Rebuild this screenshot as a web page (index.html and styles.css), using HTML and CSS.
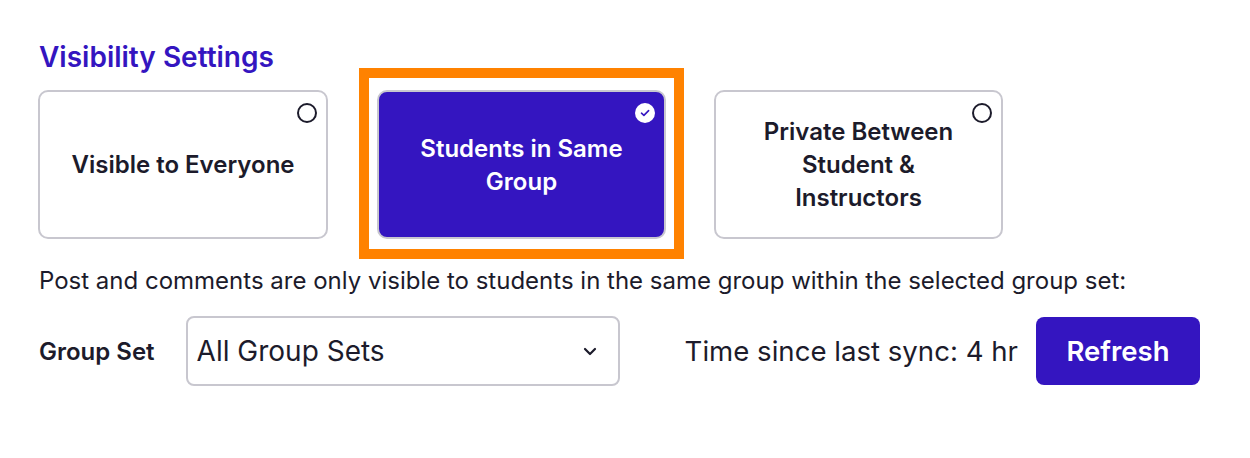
FILE: index.html
```html
<!DOCTYPE html>
<html lang="en">
<head>
    <meta charset="UTF-8">
    <meta name="viewport" content="width=device-width, initial-scale=1.0">
    <title>Visibility Settings</title>
    <link rel="stylesheet" href="styles.css">
</head>
<body>
    <div id="settings">
        <h2 class="section-title">Visibility Settings</h2>
        <div class="options">
            <div class="option">
                <span class="radio"></span>
                <span class="option-label">Visible to Everyone</span>
            </div>
            <div class="option selected">
                <span class="radio checked">
                    <svg width="10" height="8" viewBox="0 0 10 8"><path d="M1.5 4.2 L3.9 6.4 L8.6 1.6" fill="none" stroke="#3415c0" stroke-width="1.6" stroke-linecap="round" stroke-linejoin="round"/></svg>
                </span>
                <span class="option-label">Students in Same Group</span>
            </div>
            <div class="option">
                <span class="radio"></span>
                <span class="option-label">Private Between Student &amp; Instructors</span>
            </div>
        </div>
        <p class="hint">Post and comments are only visible to students in the same group within the selected group set:</p>
        <div class="group-row">
            <span class="group-label">Group Set</span>
            <div class="select">
                <span>All Group Sets</span>
                <svg width="14" height="9" viewBox="0 0 14 9"><path d="M2 2 L7 7 L12 2" fill="none" stroke="#1c1b2b" stroke-width="2.2" stroke-linecap="round" stroke-linejoin="round"/></svg>
            </div>
            <span class="sync">Time since last sync: 4 hr</span>
            <button class="refresh">Refresh</button>
        </div>
    </div>
</body>
</html>
```

FILE: styles.css
```css
body {
    margin: 0;
    padding: 0;
    background: #fff;
    font-family: 'Inter', 'Noto Sans', sans-serif;
    color: #1c1b2b;
}
#settings {
    padding: 40px 38px 0;
}
.section-title {
    margin: 0 0 16px 1px;
    font-size: 28px;
    line-height: 34px;
    font-weight: 600;
    color: #3415c0;
}
.options {
    display: flex;
    gap: 48px;
}
.option {
    position: relative;
    box-sizing: border-box;
    width: 290px;
    height: 149px;
    padding: 0 28px;
    border: 2px solid #c8c7cf;
    border-radius: 10px;
    display: flex;
    align-items: center;
    justify-content: center;
    text-align: center;
    background: #fff;
}
.option + .option {
    width: 289px;
}
.option-label {
    font-size: 24px;
    line-height: 33px;
    font-weight: 600;
}
.option.selected {
    margin-left: 1px;
    background: #3415c0;
    color: #fff;
}
/* focus ring drawn around the selected card */
.option.selected::before {
    content: "";
    position: absolute;
    top: -24px;
    left: -20px;
    right: -20px;
    bottom: -22px;
    border: 10px solid #ff8200;
}
.radio {
    position: absolute;
    top: 11px;
    right: 9px;
    box-sizing: border-box;
    width: 20px;
    height: 20px;
    border: 2px solid #1c1b2b;
    border-radius: 50%;
    display: flex;
    align-items: center;
    justify-content: center;
}
.radio.checked {
    border: none;
    background: #fff;
}
.hint {
    margin: 27px 0 0 1px;
    font-size: 24px;
    line-height: 29px;
}
.group-row {
    display: flex;
    align-items: center;
    margin-top: 21px;
}
.group-label {
    font-size: 24px;
    font-weight: 600;
    margin: 0 31px 0 1px;
}
.select {
    box-sizing: border-box;
    width: 434px;
    height: 70px;
    border: 2px solid #c8c7cf;
    border-radius: 8px;
    padding: 0 21px 0 9px;
    display: flex;
    align-items: center;
    justify-content: space-between;
    font-size: 28px;
}
.sync {
    margin-left: 65px;
    font-size: 27.6px;
}
.refresh {
    margin-left: 18px;
    width: 164px;
    height: 68px;
    border: none;
    border-radius: 8px;
    background: #3415c0;
    color: #fff;
    font-family: 'Inter', 'Noto Sans', sans-serif;
    font-size: 27.5px;
    font-weight: 600;
    cursor: pointer;
}
```
